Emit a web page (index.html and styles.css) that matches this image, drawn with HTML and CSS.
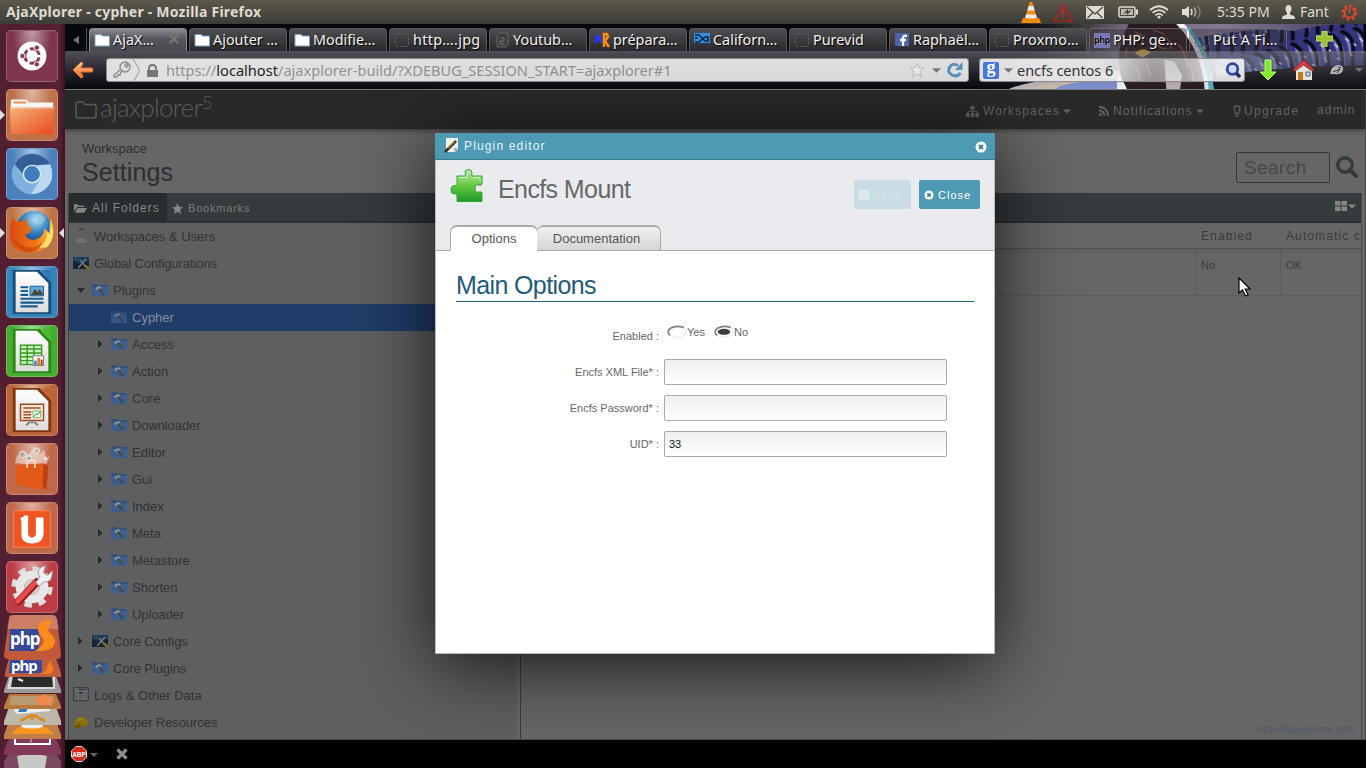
FILE: index.html
```html
<!DOCTYPE html>
<html lang="en">
<head>
<meta charset="utf-8">
<title>AjaXplorer - cypher - Mozilla Firefox</title>
<link rel="stylesheet" href="styles.css">
</head>
<body>
<svg class="defs" width="0" height="0" aria-hidden="true">
  <defs>
    <linearGradient id="orange" x1="0" y1="0" x2="1" y2="1"><stop offset="0" stop-color="#f7b27c"/><stop offset="1" stop-color="#e8481c"/></linearGradient>
    <linearGradient id="paper" x1="0" y1="0" x2="0" y2="1"><stop offset="0" stop-color="#fff"/><stop offset="1" stop-color="#dcdcdc"/></linearGradient>
    <linearGradient id="green" x1="0" y1="0" x2="0" y2="1"><stop offset="0" stop-color="#c4e8b8"/><stop offset=".5" stop-color="#62c93c"/><stop offset="1" stop-color="#1f9a2c"/></linearGradient>
    <radialGradient id="globe" cx=".55" cy=".25" r=".7"><stop offset="0" stop-color="#b8e4f4"/><stop offset=".5" stop-color="#3b86c4"/><stop offset="1" stop-color="#123c80"/></radialGradient>
    <linearGradient id="fox" x1="0" y1="0" x2="1" y2="0"><stop offset="0" stop-color="#d9480f"/><stop offset=".6" stop-color="#f07a18"/><stop offset="1" stop-color="#fbd04a"/></linearGradient>
    <linearGradient id="arrow" x1="0" y1="0" x2="0" y2="1"><stop offset="0" stop-color="#ffd09a"/><stop offset="1" stop-color="#f0641c"/></linearGradient>
    <symbol id="folder" viewBox="0 0 16 16"><path d="M1 2.500h6l1.500 1.500h7v10H1z" fill="#fff" stroke="#7ba3c4"/></symbol>
    <symbol id="blank" viewBox="0 0 16 16"><rect x="1.500" y="1.500" width="13" height="13" rx="2" fill="none" stroke="#5e5e60" stroke-dasharray="3 1.500"/></symbol>
    <symbol id="tools" viewBox="0 0 16 14"><path d="M0 2q0-1 1-1h5l1 1h8q1 0 1 1v9q0 1-1 1H1q-1 0-1-1z" fill="#34517a"/><path d="M0 4h16v8q0 1-1 1H1q-1 0-1-1z" fill="#3c5f90"/><path d="M3 5.500l3.500-2.500 3 1-1 2.500-2-.5-2 1z" fill="#8d9298"/><path d="M7 5.500l5 6.500" stroke="#4e452c" stroke-width="2"/></symbol>
    <symbol id="config" viewBox="0 0 16 14"><path d="M0 1h16v12H0z" fill="#122435"/><path d="M0 1h16v4Q8 9 0 5z" fill="#1d3c55"/><path d="M7 4l6 7M13 3l-8 9" stroke="#777b7d" stroke-width="1.500"/><path d="M12 9.500l4 3.500" stroke="#83701b" stroke-width="2.500"/><path d="M2 3h1M4 3h1" stroke="#678"/></symbol>
    <symbol id="circlex" viewBox="0 0 12 12"><circle cx="6" cy="6" r="5.500" fill="#fff"/><path d="M4 4l4 4M8 4L4 8" stroke="#3c8098" stroke-width="2"/></symbol>
    <symbol id="caret" viewBox="0 0 8 5"><path d="M0 .5h8L4 4.500z" fill="currentColor"/></symbol>
    <symbol id="right" viewBox="0 0 5 8"><path d="M0 0l4.500 4L0 8z" fill="#26292d"/></symbol>
  </defs>
</svg>

<header class="panel">
  <span class="panel-title">AjaXplorer - cypher - Mozilla Firefox</span>
  <div class="tray">
    <svg class="vlc" width="20" height="23" viewBox="0 0 20 23"><path d="M2 17L0 22h20l-2-5z" fill="#f58a12"/><path d="M8.800 1h2.400l5 17q-6.200 3-12.400 0z" fill="#f58a12"/><path d="M7.600 5h4.800l1.300 4.500H6.300zM5 13.500h10l1 3q-6 2-12 0z" fill="#ececec"/></svg>
    <svg class="warn" width="20" height="19" viewBox="0 0 20 19"><path d="M10 1.500L19 18H1z" fill="none" stroke="#d01818" stroke-width="1.200"/><path d="M10 6v6M10 13.500v2" stroke="#e02020" stroke-width="1.600"/></svg>
    <svg class="mail" width="18" height="13" viewBox="0 0 18 13"><path d="M0 0h18v13H0z" fill="#dfdbd2"/><path d="M1 1l8 7 8-7M1.500 12L7 6.500M16.500 12L11 6.500" fill="none" stroke="#45443e" stroke-width="1.200"/></svg>
    <svg class="battery" width="20" height="12" viewBox="0 0 20 12"><rect x="1" y="1" width="16" height="10" rx="1.500" fill="none" stroke="#dfdbd2" stroke-width="1.500"/><path d="M3 3h12v6H3z" fill="#bab7af"/><path d="M18 3.500h2v5h-2z" fill="#dfdbd2"/><path d="M5 8l5-5v2.500l4-2L9 9V6.500z" fill="#35342f"/></svg>
    <svg class="wifi" width="20" height="14" viewBox="0 0 20 14"><g fill="none" stroke="#dfdbd2" stroke-width="1.700"><path d="M1 5q9-7.500 18 0M3.500 7.800q6.500-5.500 13 0M6.300 10.300q3.700-3 7.400 0"/></g><path d="M8 12l2-1.500 2 1.500-2 2z" fill="#dfdbd2"/></svg>
    <svg class="sound" width="20" height="14" viewBox="0 0 20 14"><path d="M0 4h3l4-3v12l-4-3H0z" fill="#dfdbd2"/><path d="M9 4q2 3 0 6" fill="none" stroke="#dfdbd2" stroke-width="1.500"/><path d="M12 2.500q3.500 4.500 0 9" fill="none" stroke="#b1aea6" stroke-width="1.500"/><path d="M15.500.5q5 6.500 0 13" fill="none" stroke="#7c7a73" stroke-width="1.500"/></svg>
    <span class="clock">5:35 PM</span>
    <svg class="person" width="13" height="14" viewBox="0 0 13 14"><path d="M6.500 0q3 0 3 3.500T8 8v1.500l4 1.500q1 .5 1 3H0q0-2.500 1-3l4-1.500V8Q3.500 7 3.500 3.500T6.500 0z" fill="#dfdbd2"/></svg>
    <span class="user">Fant</span>
    <svg class="power" width="17" height="17" viewBox="0 0 17 17"><circle cx="8.500" cy="8.500" r="7" fill="none" stroke="#dd4830" stroke-width="2.200" stroke-dasharray="2.700 2.800"/><circle cx="8.500" cy="8.500" r="5.200" fill="none" stroke="#dd4830" stroke-width="1.800"/><path d="M8.500 3v6" stroke="#45443e" stroke-width="4"/><path d="M8.500 3v6" stroke="#dd4830" stroke-width="1.800"/></svg>
  </div>
</header>

<div class="desktop">
<nav class="launcher">
  <div class="tile dash"><svg viewBox="0 0 52 52"><circle cx="26" cy="26" r="15" fill="#fff"/><circle cx="26" cy="26" r="7.500" fill="none" stroke="#8a3a58" stroke-width="3" stroke-dasharray="12.700 3" stroke-dashoffset="-1.500"/><g fill="#8a3a58" stroke="#fff"><circle cx="16" cy="26" r="2.800"/><circle cx="31" cy="17.300" r="2.800"/><circle cx="31" cy="34.700" r="2.800"/></g></svg></div>
  <div class="tile files run"><svg viewBox="0 0 52 52"><path d="M4 11q0-1 1-1h15l3 3h25v8H4z" fill="#f5f5f5"/><path d="M7 12h13v2H7z" fill="#f0874d"/><path d="M3 18h46l-1 28H4z" fill="url(#orange)"/><path d="M3 18h46v1.500H3z" fill="#fff" opacity=".35"/></svg></div>
  <div class="tile chromium"><svg viewBox="0 0 52 52"><circle cx="26" cy="26" r="21" fill="#7fb0de"/><path d="M8 16q6-11 18-11t19 11L26 17q-7 2-9 9z" fill="#315f96"/><path d="M45 16q6 17-6 26-7 5-14 5l10-16q2-7-3-14z" fill="#bcd8f0"/><circle cx="26" cy="26" r="9" fill="#3f7cc0" stroke="#dcecf8" stroke-width="1.500"/></svg></div>
  <div class="tile firefox run active"><svg viewBox="0 0 52 52"><circle cx="28" cy="21" r="18" fill="url(#globe)"/><path d="M29 8l6-2 5 5-4 6-7-1z" fill="#9ed0e8" opacity=".6"/><path d="M6 9q2 5 5 5 4-1 7 0l2-4q2 5 1 8 6 1 4 5-1 4-6 4 2 7 10 6 9-2 10-12l5 5 1-15q7 15-1 26-9 11-24 9Q3 44 3 27 3 17 6 9z" fill="url(#fox)"/><path d="M33 41q9-5 9-16l3 3 1-12q5 16-5 25z" fill="#ffe06b"/><path d="M8 31q5 11 18 10 8-1 11-7-3 12-16 12Q9 43 8 31z" fill="#c33c0c" opacity=".6"/></svg></div>
  <div class="tile writer"><svg viewBox="0 0 52 52"><path d="M6 3h28l12 13v33H6z" fill="#144f7c"/><path d="M36 3h10v13z" fill="#2a7cb4"/><path d="M9 5h22l12 12v30H9z" fill="url(#paper)"/><path d="M14 21h8M14 25h8M14 29h8M14 33h24M14 37h24M14 41h18" stroke="#155e93" stroke-width="2.200"/><path d="M24 20h14v10H24z" fill="#67aad8" stroke="#155e93"/><path d="M25 29l4-6 3 3 2-3 4 6z" fill="#474c36"/></svg></div>
  <div class="tile calc"><svg viewBox="0 0 52 52"><path d="M6 3h28l12 13v33H6z" fill="#2c8a16"/><path d="M36 3h10v13z" fill="#48bb30"/><path d="M9 5h22l12 12v30H9z" fill="url(#paper)"/><path d="M14 20h22v20H14zM14 24h22M14 28h22M14 32h22M14 36h22M21 20v20M28 20v20" fill="#d2f2c9" stroke="#379c22" stroke-width="1.500"/><path d="M27 31h11v10H27z" fill="#fff" stroke="#777"/><path d="M28 36h3v5h-3z" fill="#4292cc"/><path d="M31.500 33h3v8h-3z" fill="#e87a28"/><path d="M35 35h2v6h-2z" fill="#95461b"/></svg></div>
  <div class="tile impress"><svg viewBox="0 0 52 52"><path d="M6 3h28l12 13v33H6z" fill="#813510"/><path d="M36 3h10v13z" fill="#bd6534"/><path d="M9 5h22l12 12v30H9z" fill="url(#paper)"/><path d="M14 20h24v17H14z" fill="#fae8db" stroke="#a34a20" stroke-width="1.500"/><path d="M17 24h18M17 28h8M17 31h8M17 34h8" stroke="#a34a20" stroke-width="1.600"/><path d="M27 27h8v7h-8z" fill="#fff" stroke="#6b6"/><path d="M28 33l2-3 2 1 3-4" fill="none" stroke="#329432"/><path d="M24 38l-4 4M28 38l4 4M26 37v3" stroke="#777" stroke-width="1.800"/></svg></div>
  <div class="tile software"><svg viewBox="0 0 52 52"><path d="M8 20l3-9 4 5 1-10 7 5 5-8 5 8 6-5 1 10 5-4-5 10z" fill="#fff" opacity=".45"/><g fill="#b8a8a2" stroke="#eee"><circle cx="16" cy="11" r="3.300"/><circle cx="31" cy="7" r="3" fill="#d3b4a8"/><circle cx="23" cy="15" r="2.500" fill="#9bac8a"/><circle cx="40" cy="15" r="1.500" fill="#ddd"/></g><path d="M9 22l29-2 5 3-2 25-31-5z" fill="#e3591a"/><path d="M38 20l5 3-2 25-4-4z" fill="#bd3e0e"/><path d="M21 25v-7q4-2 8 0v7" fill="none" stroke="#ffdcb8" stroke-width="1.800"/></svg></div>
  <div class="tile one"><svg viewBox="0 0 52 52"><path d="M7 8h38v38H7z" fill="#ef5422" stroke="#ff8a5a"/><path d="M14 15h2l2-2h4v18q0 5 4 5t4-5V15h8v16q0 11-12 11T15 31V20z" fill="#fff"/></svg></div>
  <div class="tile settings"><svg viewBox="0 0 52 52"><circle cx="26" cy="26" r="18.500" fill="none" stroke="#ddd" stroke-width="6" stroke-dasharray="7.500 7.030"/><circle cx="26" cy="26" r="12.500" fill="none" stroke="#e7e7e7" stroke-width="9"/><circle cx="26" cy="26" r="8" fill="#cfcfcf"/><path d="M12 41l19-20" stroke="#991c24" stroke-width="8" stroke-linecap="round"/><path d="M11 41l18-19" stroke="#e84b4d" stroke-width="5" stroke-linecap="round"/><path d="M30 21l4-5q-4-6 2-11l4-1-2 7 4 3 5-5q1 12-9 12l-5 4z" fill="#f1f1f1" stroke="#999"/></svg></div>
  <svg class="stack" width="65" height="153" viewBox="0 0 65 153">
    <path d="M4 147l6-11h45l6 11v6H4z" fill="#7a4860"/><path d="M17 141q15-4 30 0l-2 12H19z" fill="#c8c8c4"/>
    <path d="M4 136l5-13h47l5 13v4H4z" fill="#82395a"/><path d="M15 123h35v6H15z" fill="none" stroke="#fff" stroke-width="2"/><path d="M31 123v6" stroke="#e2b6c8"/>
    <path d="M4 120l5-14h47l5 14v4H4z" fill="#c27e49"/><path d="M11 119l8-7h27l8 7z" fill="#f8961e"/><path d="M21 112l2-7h18l2 7q-11 3-22 0z" fill="#eee"/>
    <path d="M4 106l5-14h47l5 14v4H4z" fill="#bdb7a8"/><path d="M14 94l36-2v4l-34 3z" fill="#eee"/><path d="M20 93h8l-2 4h-8z" fill="#3a7abd"/><path d="M20 106l10-5h5l10 5M32 99v6" fill="none" stroke="#d78b2c" stroke-width="3"/>
    <path d="M4 91l5-12h47l5 12v3H4z" fill="#b9783d"/><path d="M11 81h43l-2 9H9z" fill="#b69a70"/><path d="M32 86l13-7 10 7h-4v4H38v-4z" fill="#f28a4d"/>
    <path d="M4 75l5-14h47l5 14v3H4z" fill="#9a9a99"/><path d="M10 61h45v13H7z" fill="#d8d8d6"/><path d="M13 60h39l1 12H11z" fill="#2b2b2a"/><path d="M18 64l5 2" stroke="#eee" stroke-width="2"/>
    <path d="M5 58l4-15h47l5 15v4H5z" fill="#bd5e3f"/><path d="M10 45h32v13H9z" fill="#37479a"/><path d="M38 59q10-2 9-8l4-6q0 6 3 9-2 5-7 5z" fill="#f57e1c"/><text x="11" y="56" class="phpmark small">php</text>
    <path d="M9 4q0-4 4-4h39q4 0 5 4l4 36q0 4-4 4H8q-4 0-4-4z" fill="#c05a3a"/><path d="M9 4q0-4 4-4h39q4 0 5 4l2 10H7z" fill="#fff" opacity=".22"/><path d="M10 14h30l-2 22H9z" fill="#354797"/><path d="M51 5q-13 0-13 9 0 5 5 9 3 6-8 13 19 1 20-9 0-5-5-9-4-5 1-9z" fill="#f98c1d"/><text x="10" y="30" class="phpmark">php</text>
  </svg>
</nav>

<main class="browser">
  <div class="chrome">
    <svg class="persona" width="360" height="66" viewBox="0 0 360 66">
      <defs>
        <linearGradient id="fade" x1="0" y1="0" x2="1" y2="0"><stop offset="0" stop-color="#222026" stop-opacity="0"/><stop offset=".2" stop-color="#3a3436"/><stop offset=".32" stop-color="#6e6478"/><stop offset=".6" stop-color="#857a94"/><stop offset="1" stop-color="#3b3554"/></linearGradient>
        <pattern id="scales" width="26" height="44" patternUnits="userSpaceOnUse" patternTransform="rotate(-14)"><path d="M0 0h26v44H0z" fill="#33347c"/><path d="M3 4q10 4 9 18l-3 16-4-12zM16 2q8 8 5 22l-4 12z" fill="#6f7cc8"/><path d="M0 0q11 6 9 22t-6 20M13 0q12 8 8 22t-5 20" stroke="#0a0a16" stroke-width="4" fill="none"/><path d="M4 12l3 4M17 22l1 6M3 26l3 3M16 9l3 3M23 16l2 3" stroke="#cdd6f6" stroke-width="1.500"/></pattern>
      </defs>
      <path d="M0 0h360v66H0z" fill="url(#fade)"/>
      <path d="M0 66q20-8 60-12l60-8v20z" fill="#c9bfc0"/>
      <path d="M20 66q30-10 60-10l20 10z" fill="#dccba8" opacity=".6"/>
      <path d="M52 63q20-6 62-7l4 10H48z" fill="#8295d8"/>
      <path d="M190 14q60-11 100-7 20-7 70-7v46q-60 9-162 8z" fill="url(#scales)"/>
      <path d="M190 30q60-6 90 16l-80 6z" fill="#8fa6e0" opacity=".4"/>
      <path d="M203 55q60-12 157-13v24H203z" fill="#0e0e13"/>
      <path d="M122 0h53q24 25 24 66h-81q-14-36 4-66z" fill="#28191b"/>
      <path d="M158 36l10 2 8 14-2 14h-14z" fill="#e6dfe4" opacity=".8"/>
      <path d="M128 30q8-8 16-1l-8 5z" fill="#f0ae1c"/>
      <path d="M128 8l10 5-4 8M146 6l12 4M160 14q6 6 4 12M150 20q4 6 10 5M172 20q9 12 10 24M120 24l-2 12M126 42q8 6 6 14M140 40l4 14M184 40l4 18" stroke="#8c4a3a" stroke-width="1.500" fill="none"/>
      <path d="M110 66v-14q5 2 10 14z" fill="#fff"/>
      <path d="M170 0q26 26 29 66h9Q206 26 178 0z" fill="#f6f2f6"/><path d="M180 4q21 25 23 62h5Q204 26 184 4z" fill="#4cbacb"/>
    </svg>
    <div class="tabs">
      <div class="scroller"><svg width="6" height="8" viewBox="0 0 6 8"><path d="M6 0v8L0 4z" fill="#777"/></svg></div>
      <div class="tab current"><svg><use href="#folder"/></svg><span>AjaX…</span><svg class="tab-close" viewBox="0 0 10 10"><path d="M1 1l8 8M9 1L1 9" stroke="#777" stroke-width="2.200"/></svg></div>
      <div class="tab"><svg><use href="#folder"/></svg><span>Ajouter …</span></div>
      <div class="tab"><svg><use href="#folder"/></svg><span>Modifie…</span></div>
      <div class="tab wide"><svg><use href="#blank"/></svg><span>http….jpg</span></div>
      <div class="tab"><svg viewBox="0 0 16 16"><path d="M3 3l2-2h9v12l-2 2H3z" fill="#3c3c3e" stroke="#666"/><path d="M6 6h4v3H6v3h5" fill="none" stroke="#777"/></svg><span>Youtub…</span></div>
      <div class="tab"><svg viewBox="0 0 16 16"><path d="M1 11l2-8 1 7 2-7 1 8" fill="none" stroke="#2439ef" stroke-width="2"/><path d="M10 15V2h3l1 3-3 4 4 6" fill="none" stroke="#ff8a12" stroke-width="2.500"/></svg><span>prépara…</span></div>
      <div class="tab"><svg viewBox="0 0 16 16"><path d="M0 1h16v10H0z" fill="#3390df"/><path d="M1 3h4l6 6h3V5h-3l-6 5H1M1 6h3" fill="none" stroke="#0d2443" stroke-width="1.600"/></svg><span>Californ…</span></div>
      <div class="tab"><svg><use href="#blank"/></svg><span>Purevid</span></div>
      <div class="tab"><svg viewBox="0 0 16 16"><path d="M1 1h14v13H1z" fill="#4a66a7"/><path d="M9 14V6q0-3 4-2M6 8h6" fill="none" stroke="#fff" stroke-width="2.300"/></svg><span>Raphaël…</span></div>
      <div class="tab wide"><svg><use href="#blank"/></svg><span>Proxmo…</span></div>
      <div class="tab clear"><b class="php-fav">php</b><span>PHP: ge…</span></div>
      <div class="tab clear wide"><svg><use href="#blank"/></svg><span>Put A Fi…</span></div>
      <div class="tab-tools"><svg width="17" height="16" viewBox="0 0 17 16"><path d="M6 0h5v5h6v5h-6v6H6v-6H0V5h6z" fill="#98c230" stroke="#c7e26d"/></svg></div>
    </div>
    <div class="nav">
      <svg class="back" width="22" height="18" viewBox="0 0 22 18"><path d="M9 1q2 0 2 2L8.500 7H20q2 2 0 4H8.500l2.500 4q0 2-2 2L1 9z" fill="url(#arrow)" stroke="#f0702c"/></svg>
      <div class="url">
        <svg class="key" width="33" height="23" viewBox="0 0 33 23"><g fill="none" stroke="#888" stroke-width="1.300"><circle cx="18" cy="8" r="5"/><circle cx="19.500" cy="6.500" r="1.500"/><path d="M14 10l-7 6v2h3l1-2h2l1-3 3-1"/><path d="M26 0l7 11.500L26 23" stroke="#aaa"/></g></svg>
        <svg class="lock" width="11" height="13" viewBox="0 0 11 13"><path d="M2 6V4q0-3 3.500-3T9 4v2" fill="none" stroke="#777" stroke-width="1.800"/><path d="M0 6h11v7H0z" fill="#777"/></svg>
        <span class="address">https://<b>localhost</b>/ajaxplorer-build/?XDEBUG_SESSION_START=ajaxplorer#1</span>
        <svg class="star" width="16" height="16" viewBox="0 0 16 16"><path d="M8 1l2 5h5l-4 3.300L12.500 15 8 11.700 3.500 15 5 9.300 1 6h5z" fill="#eee" stroke="#bbb"/></svg>
        <svg class="drop" width="9" height="7"><use href="#caret"/></svg>
        <svg class="reload" width="16" height="16" viewBox="0 0 16 16"><path d="M13.500 11Q10 15.500 5 13T2.500 5.500 11 3.500" fill="none" stroke="#5a90c2" stroke-width="3"/><path d="M15.500 0v8H8z" fill="#5a90c2"/></svg>
      </div>
      <div class="finder">
        <span class="google">g</span><svg class="drop" width="9" height="7"><use href="#caret"/></svg>
        <span class="query">encfs centos 6</span>
        <svg width="17" height="17" viewBox="0 0 17 17"><circle cx="7.500" cy="7" r="5.300" fill="#d0dbef" stroke="#31479a" stroke-width="2.800"/><path d="M11 11l4 4" stroke="#283060" stroke-width="3.500"/></svg>
      </div>
      <svg class="down" width="18" height="22" viewBox="0 0 18 22"><path d="M6 1h6v12h5l-8 8-8-8h5z" fill="#82e82a" stroke="#bfff80"/></svg>
      <svg class="home" width="23" height="22" viewBox="0 0 23 22"><path d="M4 10v11h16V10l-8-7z" fill="#e7e4dc"/><path d="M1 11L11.500 1 22 11l-2 1-8.500-6L3 12z" fill="#d94040" stroke="#982828"/><path d="M6 13h5v8H6z" fill="#c17b28"/><path d="M14 13h4v4h-4z" fill="#c7def0" stroke="#567"/></svg>
      <svg class="bird" width="13" height="11" viewBox="0 0 13 11"><path d="M0 9q1-8 8-9 6 0 5 5-1 5-9 4z" fill="#b5b5b5"/><path d="M3 7l7-3-3 4M8 2l3 1" stroke="#333" fill="none"/></svg>
      <svg class="drop" width="8" height="6"><use href="#caret"/></svg>
    </div>
  </div>

  <div class="page">
    <div class="app-header">
      <svg class="logo-icon" width="22" height="18" viewBox="0 0 22 18"><path d="M1 14.500V3q0-2 2-2h5l2 2.500h9q2 0 2 2v9q0 2.500-2 2.500H3q-2 0-2-2.500z" fill="none" stroke="#5b5b5b" stroke-width="1.500"/></svg>
      <span class="logo">ajaxplorer<sup>5</sup></span>
      <div class="menu workspaces"><svg width="13" height="11" viewBox="0 0 13 11"><path d="M4.500 0h4v3.500h-4zM0 7h3.500v4H0zM4.700 7h3.600v4H4.700zM9.500 7H13v4H9.500z" fill="#606060"/><path d="M6.500 3v4M2 7V5.300h9V7" fill="none" stroke="#606060"/></svg><span>Workspaces</span><svg width="8" height="5"><use href="#caret"/></svg></div>
      <div class="menu notifications"><svg width="10" height="10" viewBox="0 0 10 10"><circle cx="1.500" cy="8.500" r="1.500" fill="#606060"/><path d="M0 4.500q5 0 5.500 5.500M0 1q8.500 0 9 9" fill="none" stroke="#606060" stroke-width="1.800"/></svg><span>Notifications</span><svg width="8" height="5"><use href="#caret"/></svg></div>
      <div class="menu upgrade"><svg width="8" height="12" viewBox="0 0 8 12"><path d="M2.500 8.500Q2.500 7 1.500 5.500 0 1 4 1t2.500 4.500Q5.500 7 5.500 8.500zM2.500 11h3" fill="none" stroke="#606060" stroke-width="1.300"/></svg><span>Upgrade</span></div>
      <div class="menu admin">admin</div>
    </div>
    <div class="heading">
      <div class="crumb"><div class="crumb-label">Workspace</div><div class="crumb-title">Settings</div></div>
      <div class="search">Search</div>
      <svg class="search-icon" width="22" height="22" viewBox="0 0 22 22"><circle cx="9" cy="9" r="7.200" fill="none" stroke="#33393d" stroke-width="3.400"/><path d="M14 14l6 6" stroke="#33393d" stroke-width="4" stroke-linecap="round"/></svg>
    </div>
    <div class="panes">
      <aside class="tree">
        <div class="tree-bar">
          <div class="tree-tab on"><svg width="13" height="11" viewBox="0 0 14 11"><path d="M0 9V1h4l1 1.500h6V4H3.500z" fill="#868686"/><path d="M4 5h10l-3 5H1z" fill="#868686"/></svg><span>All Folders</span></div>
          <div class="tree-tab marks"><svg width="11" height="11" viewBox="0 0 16 16"><path d="M8 0l2.300 5.300L16 6l-4.200 3.800L13 16l-5-3.200L3 16l1.200-6.200L0 6l5.700-.7z" fill="#868686"/></svg><span>Bookmarks</span></div>
        </div>
        <ul class="nodes">
          <li class="l0"><svg viewBox="0 0 16 16"><path d="M2 15q0-4 4-5h4q4 1 4 5z" fill="#6e6e70"/><path d="M5.500 3q0-3 2.500-3t2.500 3-2.500 6q-2.500-2-2.500-6z" fill="#6f5d52"/><path d="M5.500 3Q5.500 0 8 0t2.500 3L8 2z" fill="#4c3c33"/></svg><span>Workspaces &amp; Users</span></li>
          <li class="l0"><svg><use href="#config"/></svg><span class="tight">Global Configurations</span></li>
          <li class="l1"><i><svg class="open" width="8" height="5" viewBox="0 0 8 5"><path d="M0 0h8L4 5z" fill="#26292d"/></svg></i><svg><use href="#tools"/></svg><span>Plugins</span></li>
          <li class="l2 selected"><i></i><svg class="dimmed"><use href="#tools"/></svg><span>Cypher</span></li>
          <li class="l2"><i><svg class="shut"><use href="#right"/></svg></i><svg><use href="#tools"/></svg><span>Access</span></li>
          <li class="l2"><i><svg class="shut"><use href="#right"/></svg></i><svg><use href="#tools"/></svg><span>Action</span></li>
          <li class="l2"><i><svg class="shut"><use href="#right"/></svg></i><svg><use href="#tools"/></svg><span>Core</span></li>
          <li class="l2"><i><svg class="shut"><use href="#right"/></svg></i><svg><use href="#tools"/></svg><span class="tight">Downloader</span></li>
          <li class="l2"><i><svg class="shut"><use href="#right"/></svg></i><svg><use href="#tools"/></svg><span>Editor</span></li>
          <li class="l2"><i><svg class="shut"><use href="#right"/></svg></i><svg><use href="#tools"/></svg><span>Gui</span></li>
          <li class="l2"><i><svg class="shut"><use href="#right"/></svg></i><svg><use href="#tools"/></svg><span>Index</span></li>
          <li class="l2"><i><svg class="shut"><use href="#right"/></svg></i><svg><use href="#tools"/></svg><span>Meta</span></li>
          <li class="l2"><i><svg class="shut"><use href="#right"/></svg></i><svg><use href="#tools"/></svg><span>Metastore</span></li>
          <li class="l2"><i><svg class="shut"><use href="#right"/></svg></i><svg><use href="#tools"/></svg><span>Shorten</span></li>
          <li class="l2"><i><svg class="shut"><use href="#right"/></svg></i><svg><use href="#tools"/></svg><span class="tight">Uploader</span></li>
          <li class="l1"><i><svg class="shut"><use href="#right"/></svg></i><svg><use href="#config"/></svg><span class="tight">Core Configs</span></li>
          <li class="l1"><i><svg class="shut"><use href="#right"/></svg></i><svg><use href="#tools"/></svg><span class="tight">Core Plugins</span></li>
          <li class="l0"><svg viewBox="0 0 16 16"><rect x=".7" y=".7" width="14.600" height="13" rx="1" fill="#6c6c6d" stroke="#3c3e40" stroke-width="1.300"/><path d="M5 2.500h8" stroke="#303234"/><path d="M6 5h4v2H6z" fill="#1e3b66"/><path d="M2.500 6h2M2.500 8h2M2.500 10h2M6 9h4M6 11h4M11.500 6h2M11.500 8h2M11.500 10h2" stroke="#484b4e"/></svg><span>Logs &amp; Other Data</span></li>
          <li class="l0"><svg viewBox="0 0 16 16"><path d="M1 12Q1 5 7 3q6-1 8 4v4l-7 2-5 1q-3 0-2-2z" fill="#88700f"/><path d="M1 12q4-1 6-3l1 4-5 1q-3 0-2-2z" fill="#6b5509"/><path d="M4 7q2-3 5-2" stroke="#ae9736" fill="none"/></svg><span class="tight">Developer Resources</span></li>
        </ul>
      </aside>
      <section class="list">
        <div class="list-bar"><svg width="12" height="10" viewBox="0 0 12 10"><path d="M0 0h5.500v4.500H0zM6.500 0H12v4.500H6.500zM0 5.500h5.500V10H0zM6.500 5.500H12V10H6.500z" fill="#868686"/></svg><svg class="list-caret" width="8" height="5"><use href="#caret"/></svg></div>
        <div class="columns head"><span></span><span>Enabled</span><span>Automatic c</span></div>
        <div class="columns row"><span></span><span>No</span><span>OK</span></div>
        <div class="site">http://ajaxplorer.info/</div>
      </section>
    </div>
  </div>

  <footer class="addons">
    <svg width="16" height="16" viewBox="0 0 16 16"><path d="M5 .5h6L15.500 5v6L11 15.500H5L.5 11V5z" fill="#d8281c" stroke="#ddd"/><text x="8" y="10.800" class="abp">ABP</text></svg>
    <svg class="drop" width="8" height="6"><use href="#caret"/></svg>
    <svg class="cross" width="12" height="12" viewBox="0 0 12 12"><path d="M1.500 1.500l9 9M10.500 1.500l-9 9" stroke="#8d8d8d" stroke-width="3.200"/></svg>
  </footer>
</main>
</div>

<div class="dialog">
  <div class="dialog-title">
    <svg width="15" height="15" viewBox="0 0 15 15"><path d="M2 0h12v11l-3 3H2z" fill="#f4f4ee"/><path d="M14 10l-4 4v-4z" fill="#aab"/><path d="M1 14L12 3" stroke="#2e2a22" stroke-width="2.600"/><path d="M3.500 10.500l7-7" stroke="#b8954a" stroke-width="1.200"/></svg>
    <span>Plugin editor</span>
    <svg class="dismiss" width="12" height="12"><use href="#circlex"/></svg>
  </div>
  <div class="dialog-head">
    <div class="plugin">
      <svg class="puzzle" width="34" height="36" viewBox="0 0 34 36"><path d="M7 8h8.500q.5-1-.5-3 0-3.500 3.500-3.500T22 5q-.5 2 0 3h10v8q-1 2-3 1-4-1-4 3.500t4 3.500q2-1 3 1v8.500H7V27q-1-2-3-1-3 0-3-4t3-4.500q2 .5 3-1z" fill="url(#green)" stroke="#35a52e"/><path d="M8.500 9.500h8l1-4M23 9.500h7v4" fill="none" stroke="#eaffdf" opacity=".7"/></svg>
      <h1>Encfs Mount</h1>
      <div class="button save"><svg width="10" height="10" viewBox="0 0 10 10"><path d="M.7.7H8L9.300 2v7.300H.7zM3 .7v3h4v-3M2.500 9V6h5v3" fill="none" stroke="#e7f0f4" stroke-width="1.300"/></svg><span>Save</span></div>
      <div class="button"><svg width="10" height="10" viewBox="0 0 12 12"><use href="#circlex"/></svg><span>Close</span></div>
    </div>
    <div class="dialog-tabs"><div class="dtab shown">Options</div><div class="dtab docs">Documentation</div></div>
  </div>
  <div class="form">
    <h2>Main Options</h2>
    <div class="field radios"><label>Enabled :</label>
      <svg width="20" height="14" viewBox="0 0 20 14"><ellipse cx="10" cy="7" rx="9" ry="5.500" fill="#fff" stroke="#eee" stroke-width="1.500"/><path d="M3 10.500Q-1 6 4 3t13-.500" fill="none" stroke="#808080" stroke-width="1.800"/></svg><span>Yes</span>
      <svg width="20" height="14" viewBox="0 0 20 14"><ellipse cx="10" cy="7" rx="9" ry="5.500" fill="#fff" stroke="#eee" stroke-width="1.500"/><path d="M3 10.500Q-1 6 4 3t13-.500" fill="none" stroke="#808080" stroke-width="1.800"/><ellipse cx="10" cy="6.800" rx="6.300" ry="3" fill="#3c3c3c"/></svg><span>No</span>
    </div>
    <div class="field"><label>Encfs XML File* :</label><div class="input"></div></div>
    <div class="field"><label>Encfs Password* :</label><div class="input"></div></div>
    <div class="field"><label>UID* :</label><div class="input">33</div></div>
  </div>
</div>
<svg class="pointer" width="14" height="21" viewBox="0 0 14 21"><path d="M1 1v15l3.500-3 3 6 2.500-1.200-2.800-5.800H12z" fill="#fff" stroke="#000" stroke-width="1.200"/></svg>
</body>
</html>
```
FILE: styles.css
```css
* { box-sizing: border-box; }
body {
  margin: 0;
  width: 1366px;
  height: 768px;
  overflow: hidden;
  position: relative;
  display: flex;
  flex-direction: column;
  font-family: "Liberation Sans", Arial, sans-serif;
  font-size: 13px;
  background: #000;
}
svg { display: block; flex: none; }
.defs { position: absolute; }

/* Desktop panel */
.panel {
  height: 24px;
  flex: none;
  display: flex;
  align-items: center;
  justify-content: space-between;
  background: linear-gradient(#5c594c, #3c3b37);
  color: #dfdbd2;
  font-family: "Noto Sans", sans-serif;
  font-size: 14px;
}
.panel-title { padding-left: 6px; margin-top: -2px; font-weight: bold; font-size: 14px; letter-spacing: .23px; white-space: nowrap; }
.tray { display: flex; align-items: center; width: 345px; height: 24px; }
.warn { margin-left: 12px; }
.mail { margin-left: 13px; }
.battery { margin-left: 14px; }
.wifi { margin-left: 11px; }
.sound { margin-left: 13px; }
.clock { margin: -2px 0 0 15px; width: 65px; white-space: nowrap; }
.user { margin: -2px 0 0 5px; width: 41px; }

.desktop { flex: 1; display: flex; min-height: 0; }

/* Launcher */
.launcher {
  width: 65px;
  flex: none;
  display: flex;
  flex-direction: column;
  gap: 7px;
  padding-top: 6px;
  background: linear-gradient(90deg, #511f30 0, #552034 60px, #361522 65px);
  overflow: hidden;
}
.tile {
  position: relative;
  width: 52px;
  height: 52px;
  flex: none;
  margin-left: 6px;
  border-radius: 5px;
  border: 1px solid rgba(255, 255, 255, .22);
}
.tile::before {
  content: "";
  position: absolute;
  inset: 0;
  border-radius: 4px;
  background: radial-gradient(ellipse at 50% 0, rgba(255,255,255,.5), rgba(255,255,255,0) 55%);
}
.tile svg { position: relative; width: 50px; height: 50px; }
.dash { background: #7f3550; }
.files { background: #c07048; }
.chromium { background: #4b82bd; }
.firefox { background: #bd7446; }
.writer { background: #3883ba; }
.calc { background: #46ac32; }
.impress { background: #ba6539; }
.software, .one { background: #bf684a; }
.settings { background: #bd3d46; }
.run::after {
  content: "";
  position: absolute;
  left: -7px;
  top: 20px;
  border: 5px solid transparent;
  border-left-color: #ddd;
  border-right-width: 0;
}
/* The focused window gets a second marker on the right; both are clipped from one strip. */
.active::after {
  width: 65px;
  height: 10px;
  border: 0;
  background: #ddd;
  clip-path: polygon(0 0, 5px 5px, 0 10px, 0 5px, 59px 5px, 64px 0, 64px 10px, 59px 5px, 0 5px);
}
.stack { margin-top: -5px; }
.phpmark { font: bold 17px "Noto Sans", sans-serif; fill: #fff; letter-spacing: -1px; }
.phpmark.small { font-size: 15px; }

/* Browser chrome */
.browser { flex: 1; min-width: 0; display: flex; flex-direction: column; }
.chrome {
  position: relative;
  height: 66px;
  flex: none;
  border-bottom: 1px solid #77797b;
  background: #07070e;
  font-family: "Noto Sans", sans-serif;
}
.persona { position: absolute; right: 0; top: 0; height: 65px; }
.tabs { position: relative; display: flex; height: 27px; padding-top: 4px; gap: 2px; }
.scroller { width: 22px; display: flex; align-items: center; padding-left: 8px; border-right: 1px solid #555; }
.tab {
  width: 98px;
  height: 23px;
  flex: none;
  display: flex;
  align-items: center;
  gap: 3px;
  padding-left: 4px;
  border-radius: 4px 4px 0 0;
  border: 1px solid #58585b;
  border-bottom: 0;
  background: linear-gradient(#4e4e52, #29292c);
  color: #f2f2f2;
  font-size: 14.400px;
  line-height: 20px;
  text-shadow: 1px 1px 1px #000;
  white-space: nowrap;
}
.tab svg { width: 16px; height: 16px; }
.tab span { flex: 1; margin-top: -1px; }
.tab.wide span { letter-spacing: .3px; }
.tab.current { background: linear-gradient(#8b8b90, #55565c 45%, #4a4a50); border-color: #8d8e92; }
.tab.clear { background: rgba(60, 56, 66, .45); border-color: rgba(140, 140, 150, .5); }
.tab .tab-close { width: 10px; height: 10px; margin-right: 7px; margin-top: -2px; }
.php-fav { width: 16px; height: 15px; overflow: hidden; background: #7777b5; color: #000; font: bold 9px/13px "Noto Sans", sans-serif; letter-spacing: -.5px; text-shadow: 0 0 1px #fff; }
.tab-tools { padding-left: 27px; padding-top: 3px; }
.nav {
  position: relative;
  display: flex;
  align-items: center;
  height: 38px;
  padding-left: 7px;
  background: linear-gradient(rgba(110, 110, 120, .7), rgba(80, 80, 90, .25) 70%, rgba(40, 40, 50, .05));
  color: #888;
}
.url, .finder {
  display: flex;
  align-items: center;
  height: 24px;
  border: 1px solid #8b8b8b;
  border-radius: 3px;
  background: #e0e0e0;
  font-size: 14.600px;
}
.url { width: 863px; margin-left: 12px; }
.lock { margin-left: 7px; }
.address { flex: 1; margin-left: 8px; color: #929292; white-space: nowrap; }
.address b { color: #222; font-weight: normal; }
.url .drop { margin: 0 6px 0 7px; color: #777; }
.reload { margin-right: 5px; }
.finder { width: 266px; margin-left: 10px; padding: 0 2px 0 3px; background: linear-gradient(90deg, #e4e2e4 45%, rgba(255, 255, 255, .75) 52%, rgba(255, 255, 255, .5) 65%, rgba(255, 255, 255, .55) 76%, rgba(255, 255, 255, .85) 90%); color: #555; }
.google { width: 16px; height: 17px; background: #4679df; color: #fff; font: bold 18px/11px "Liberation Serif", serif; text-align: center; border-radius: 2px; }
.finder .drop { margin: 0 6px 0 5px; color: #777; }
.query { flex: 1; color: #333; white-space: nowrap; margin-left: -2px; letter-spacing: -.1px; }
.down { margin-left: 14px; }
.home { margin-left: 15px; }
.bird { margin-left: 15px; }
.nav > .drop { margin-left: 12px; color: #777; }

/* Web application */
.page { flex: 1; min-height: 0; display: flex; flex-direction: column; background: #666; border-bottom: 1px solid #4b4b4b; border-right: 1px solid #484848; }
.app-header { height: 39px; flex: none; display: flex; align-items: center; padding-left: 10px; background: #292929; box-shadow: 0 1px 5px #333; color: #636363; }
.logo { margin-left: 3px; margin-top: -5px; width: 867px; font-family: Lato, sans-serif; font-weight: 300; font-size: 26px; letter-spacing: -.7px; color: #5c5c5c; }
.logo sup { font-size: 18px; line-height: 0; vertical-align: 8px; }
.menu { display: flex; align-items: center; font-size: 12px; letter-spacing: 1.100px; padding-top: 3px; white-space: nowrap; }
.workspaces { gap: 4px; width: 133px; margin-left: -1px; }
.notifications { gap: 4px; width: 134px; }
.upgrade { gap: 3px; width: 84px; letter-spacing: 1.300px; }
.admin { padding-top: 1px; letter-spacing: 1.200px; }
.workspaces span, .notifications span { margin-right: -1px; }
.heading { height: 64px; flex: none; display: flex; padding: 12px 4px 0 17px; color: #2c2f32; }
.crumb { width: 1154px; }
.crumb-label { line-height: 15px; }
.crumb-title { font-size: 25px; line-height: 32px; letter-spacing: .1px; }
.search { width: 94px; height: 31px; margin-top: 11px; border: 1px solid #30383c; border-radius: 2px; padding-left: 7px; font-size: 19px; line-height: 30px; letter-spacing: .4px; color: #464749; }
.search-icon { margin: 15px 0 0 6px; }
.panes { flex: 1; min-height: 0; display: flex; padding: 0 3px; }
.tree { width: 449px; flex: none; background: #5e5f60; border-left: 1px solid #444; }
.tree-bar { height: 30px; display: flex; background: #353a3d; border-bottom: 2px solid #2a3034; color: #868686; letter-spacing: 1px; border-radius: 2px 2px 0 0; }
.tree-tab { display: flex; align-items: center; gap: 5px; padding: 2px 0 0 5px; font-size: 12px; }
.tree-tab.on { width: 98px; background: #282d30; }
.marks { font-size: 11px; letter-spacing: .8px; color: #7c7c7c; }
.nodes { list-style: none; margin: 0; padding: 0; color: #303337; }
.nodes li { display: flex; align-items: center; height: 27px; padding-left: 4px; white-space: nowrap; }
.nodes li > svg { width: 16px; height: 16px; margin-top: -1px; }
.nodes span { padding-left: 5px; }
.nodes .tight { letter-spacing: -.1px; }
.nodes .l1 { padding-left: 8px; }
.nodes .l2 { padding-left: 28px; }
.nodes i { width: 15px; display: flex; }
.nodes .l2 i { width: 14px; }
.nodes .shut { width: 5px; height: 8px; margin: -2px 0 0 1px; }
.nodes .selected { background: #203c68; color: #87909c; }
.dimmed { opacity: .7; }
.list { flex: 1; min-width: 0; display: flex; flex-direction: column; margin-left: 3px; border-left: 1px solid #3c3c3c; border-right: 1px solid #4b4b4b; }
.list-bar { height: 30px; display: flex; justify-content: flex-end; align-items: center; padding-right: 5px; gap: 1px; background: #353a3d; border-bottom: 2px solid #2a3034; color: #868686; padding-bottom: 2px; }
.columns { display: grid; grid-template-columns: 674px 85px 1fr; }
.columns span { padding-left: 6px; overflow: hidden; white-space: nowrap; }
.head { height: 26px; line-height: 26px; font-size: 12px; letter-spacing: 1.100px; color: #373a3e; border-bottom: 1px solid #505050; }
.row { height: 47px; line-height: 33px; font-size: 11px; color: #393b3e; border-bottom: 1px solid #5c5c5c; background: linear-gradient(#626262, #666 8px); }
.row span + span { border-left: 1px solid #5c5c5c; padding-left: 5px; }
.site { margin-top: auto; padding: 0 5px 3px 0; text-align: right; font-size: 11px; line-height: 13px; color: #4f5a6b; }

.addons { height: 28px; flex: none; display: flex; align-items: center; padding-left: 6px; background: #000; color: #666; }
.addons .drop { margin: 2px 18px 0 3px; }
.abp { font: bold 6.500px "Liberation Sans", sans-serif; fill: #fff; text-anchor: middle; }

/* Plugin editor dialog, floating over the page */
.dialog { position: absolute; left: 435px; top: 133px; width: 560px; height: 521px; background: #fff; border: 1px solid #bbb; border-top: 0; border-radius: 3px 3px 1px 1px; box-shadow: 0 10px 75px rgba(0, 0, 0, .78); }
.dialog-title { height: 27px; display: flex; align-items: center; margin: 0 -1px; padding: 0 8px 1px 9px; background: #4e99b3; border-bottom: 1px solid #3c788e; border-radius: 3px 3px 0 0; color: #e8f3f6; font-size: 12px; letter-spacing: 1.150px; }
.dialog-title span { flex: 1; padding-left: 5px; }
.dismiss { margin-top: 2px; }
.dialog-head { height: 91px; display: flex; flex-direction: column; justify-content: space-between; background: #eaebef; border-bottom: 1px solid #aaa; }
.plugin { display: flex; padding: 8px 14px 0; gap: 8px; }
.plugin h1 { flex: 1; margin: 5px 0 0 6px; font-size: 25px; line-height: 32px; letter-spacing: -.6px; font-weight: normal; color: #686868; }
.button { display: flex; align-items: center; gap: 4px; width: 61px; height: 29px; margin-top: 12px; padding-left: 5px; border-radius: 2px; background: #4e99b3; color: #fff; font-size: 11px; letter-spacing: 1px; }
.save { width: 57px; background: #cbdde4; color: #d7e5eb; }
.dialog-tabs { display: flex; height: 26px; padding-left: 14px; margin-bottom: -1px; }
.dtab { height: 26px; border: 1px solid #aaa; border-radius: 7px 7px 0 0; border-width: 2px 1px 1px; border-bottom-color: transparent; text-align: center; line-height: 24px; color: #555; }
.dtab.shown { width: 88px; background: #fff; border-bottom-color: #fff; }
.dtab.docs { width: 124px; height: 26px; margin-left: -1px; padding-right: 4px; background: linear-gradient(#efefef, #d5d5d5); border-bottom-color: #aaa; border-left: 0; }
.form { padding: 20px 20px 0; color: #666; font-size: 11px; }
.form h2 { margin: 0; height: 31px; border-bottom: 1px solid #28607b; color: #1e5b7b; font-size: 25px; line-height: 29px; letter-spacing: -.620px; font-weight: normal; }
.field { display: flex; align-items: center; height: 26px; margin-bottom: 10px; white-space: nowrap; }
.field label { width: 203px; text-align: right; margin-right: 5px; }
.input { width: 283px; height: 26px; border: 1px solid #aaa; border-radius: 2px; background: linear-gradient(#efefef, #fff); padding-left: 4px; color: #111; line-height: 25px; }
.radios { height: 14px; margin: 23px 0 20px; }
.radios label { margin-right: 8px; padding-top: 8px; }
.radios span { margin-right: 9px; }

.pointer { position: absolute; left: 1238px; top: 277px; }
```
